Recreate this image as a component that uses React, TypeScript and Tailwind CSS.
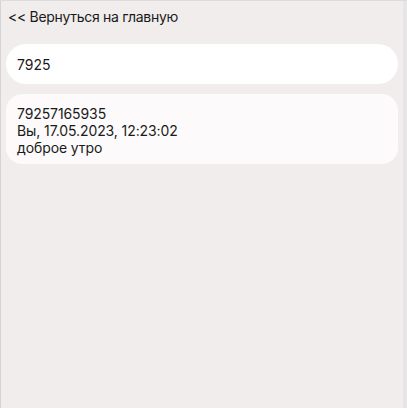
export default function App() {
  return (
    <div
      className="flex h-[408px] w-[407px] overflow-hidden border-t border-[#dcdcdc] bg-[#f0edec] text-[14px] text-[#1a1a1a]"
      style={{ fontFamily: 'Inter, "Liberation Sans", sans-serif' }}
    >
      <div className="flex flex-1 flex-col border-l border-[#d4d4d4] px-[5px]">
        <a href="#" className="mt-[7px] block pl-[2px] leading-[17px] tracking-[-0.3px]">
          &lt;&lt; Вернуться на главную
        </a>
        <div className="mt-[19px] flex h-[40px] items-center rounded-full bg-white px-[11px]">
          7925
        </div>
        <div className="mt-[10px] rounded-[16px] bg-[#fcfafa] px-[11px] pt-[11px] pb-[8px] leading-[17px] tracking-[-0.1px]">
          <div>79257165935</div>
          <div>Вы, 17.05.2023, 12:23:02</div>
          <div>доброе утро</div>
        </div>
      </div>
      <div className="w-[4px] shrink-0 bg-[#e6e6e6]" />
    </div>
  );
}
